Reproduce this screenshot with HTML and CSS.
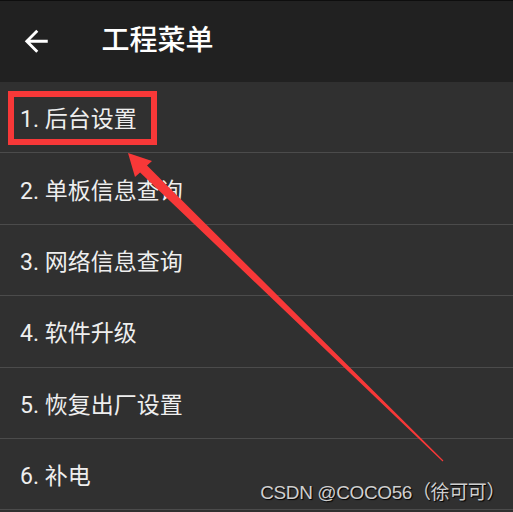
FILE: index.html
```html
<!DOCTYPE html>
<html lang="zh">
<head>
<meta charset="utf-8">
<title>工程菜单</title>
<link rel="stylesheet" href="styles.css">
</head>
<body>
<div class="screen">
  <header class="toolbar">
    <svg class="back" viewBox="0 0 24 24" width="34.5" height="34.5"><path d="M20 11H7.83l5.59-5.59L12 4l-8 8 8 8 1.41-1.41L7.83 13H20v-2z" fill="#ffffff"/></svg>
    <h1 class="title">工程菜单</h1>
  </header>
  <ul class="menu">
    <li class="item">1. 后台设置</li>
    <li class="item">2. 单板信息查询</li>
    <li class="item">3. 网络信息查询</li>
    <li class="item">4. 软件升级</li>
    <li class="item">5. 恢复出厂设置</li>
    <li class="item">6. 补电</li>
  </ul>
  <svg class="annot" width="513" height="512" viewBox="0 0 513 512">
    <rect x="11" y="94" width="143" height="48" fill="none" stroke="#f73838" stroke-width="6"/>
    <polygon fill="#f73838" points="128,153 152,161 147,165.6 443.4,460.6 442.6,461.4 140.1,172.4 135,177"/>
  </svg>
  <div class="mark">CSDN @COCO56（徐可可）</div>
</div>
</body>
</html>
```

FILE: styles.css
```css
html, body {
  margin: 0;
  padding: 0;
  background: #303030;
}
.screen {
  position: relative;
  width: 513px;
  height: 512px;
  overflow: hidden;
  background: #303030;
  font-family: Roboto, "Noto Sans CJK SC", sans-serif;
}
.toolbar {
  box-sizing: border-box;
  height: 82px;
  background: #212121;
  border-top: 1px solid #0e0e0e;
  display: flex;
  align-items: center;
  padding-left: 19px;
}
.back {
  display: block;
  flex: none;
}
.title {
  margin: 0 0 0 48px;
  font-size: 28px;
  font-weight: 500;
  color: #ffffff;
  line-height: 1;
  padding-bottom: 2px;
}
.menu {
  list-style: none;
  margin: 0;
  padding: 0;
  display: flex;
  flex-direction: column;
}
.item {
  height: 70.4px;
  border-bottom: 1px solid #4b4b4b;
  display: flex;
  align-items: center;
  padding-left: 20px;
  font-size: 23px;
  color: #eeeeee;
}
.annot {
  position: absolute;
  left: 0;
  top: 0;
}
.mark {
  position: absolute;
  right: 8px;
  bottom: 8px;
  font-family: "Liberation Sans", "Noto Sans CJK SC", sans-serif;
  font-size: 19px;
  letter-spacing: -0.4px;
  color: #cfcfcf;
  text-shadow: 1px 1px 1px #000000;
}
```
